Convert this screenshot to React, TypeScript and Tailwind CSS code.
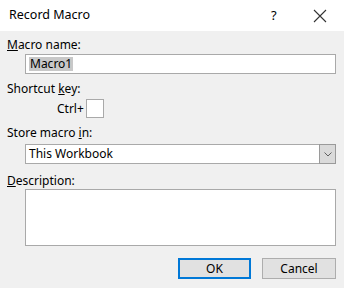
const font = { fontFamily: '"Noto Sans", "Open Sans", sans-serif' };

const App = () => {
  return (
    <div className="w-[344px] h-[288px] bg-[#f0f0f0] text-[12px] text-black overflow-hidden" style={font}>
      {/* title bar */}
      <div className="h-[31px] bg-white flex items-center pl-[9px]">
        <span className="text-[12.5px] flex-1">Record Macro</span>
        <span className="w-[10px] text-[13px] mr-[32px]">?</span>
        <svg width="14" height="14" viewBox="0 0 14 14" className="mr-[17px]">
          <path d="M1 1 L13 13 M13 1 L1 13" stroke="#333" strokeWidth="1.1" fill="none" />
        </svg>
      </div>

      <div className="pl-[7px] pr-[8px]">
        <div className="h-[16px] leading-[16px] mt-[6px]">
          <span className="underline">M</span>acro name:
        </div>
        <div className="ml-[18px] mt-[1px] h-[20px] bg-white border border-[#a9a9a9] flex items-center pl-[3px]">
          <span className="bg-[#c8c8c8] leading-[14px] px-[1px]">Macro1</span>
        </div>

        <div className="h-[16px] leading-[16px] mt-[7px]">
          Shortcut <span className="underline">k</span>ey:
        </div>
        <div className="flex items-center mt-[2px] pl-[50px]">
          <span className="w-[29px]">Ctrl+</span>
          <div className="w-[18px] h-[19px] bg-white border border-[#a9a9a9]" />
        </div>

        <div className="h-[16px] leading-[16px] mt-[7px]">
          Store macro <span className="underline">i</span>n:
        </div>
        <div className="ml-[18px] mt-[3px] h-[20px] bg-white border border-[#a9a9a9] flex items-center">
          <span className="flex-1 pl-[3px]">This Workbook</span>
          <div className="w-[17px] h-[20px] -my-px -mr-px bg-[#dadada] border border-[#9a9a9a] flex items-center justify-center">
            <svg width="8" height="5" viewBox="0 0 8 5">
              <path d="M0.5 0.5 L4 4 L7.5 0.5" stroke="#606060" strokeWidth="1" fill="none" />
            </svg>
          </div>
        </div>

        <div className="h-[16px] leading-[16px] mt-[9px]">
          <span className="underline">D</span>escription:
        </div>
        <div className="ml-[18px] h-[57px] bg-white border border-[#a9a9a9]" />

        <div className="flex justify-end gap-[11px] mt-[12px]">
          <button className="w-[73px] h-[21px] bg-[#e1e1e1] border-2 border-[#0078d7] flex items-center justify-center">
            OK
          </button>
          <button className="w-[74px] h-[21px] bg-[#e1e1e1] border border-[#adadad] flex items-center justify-center">
            Cancel
          </button>
        </div>
      </div>
    </div>
  );
};

export default App;
